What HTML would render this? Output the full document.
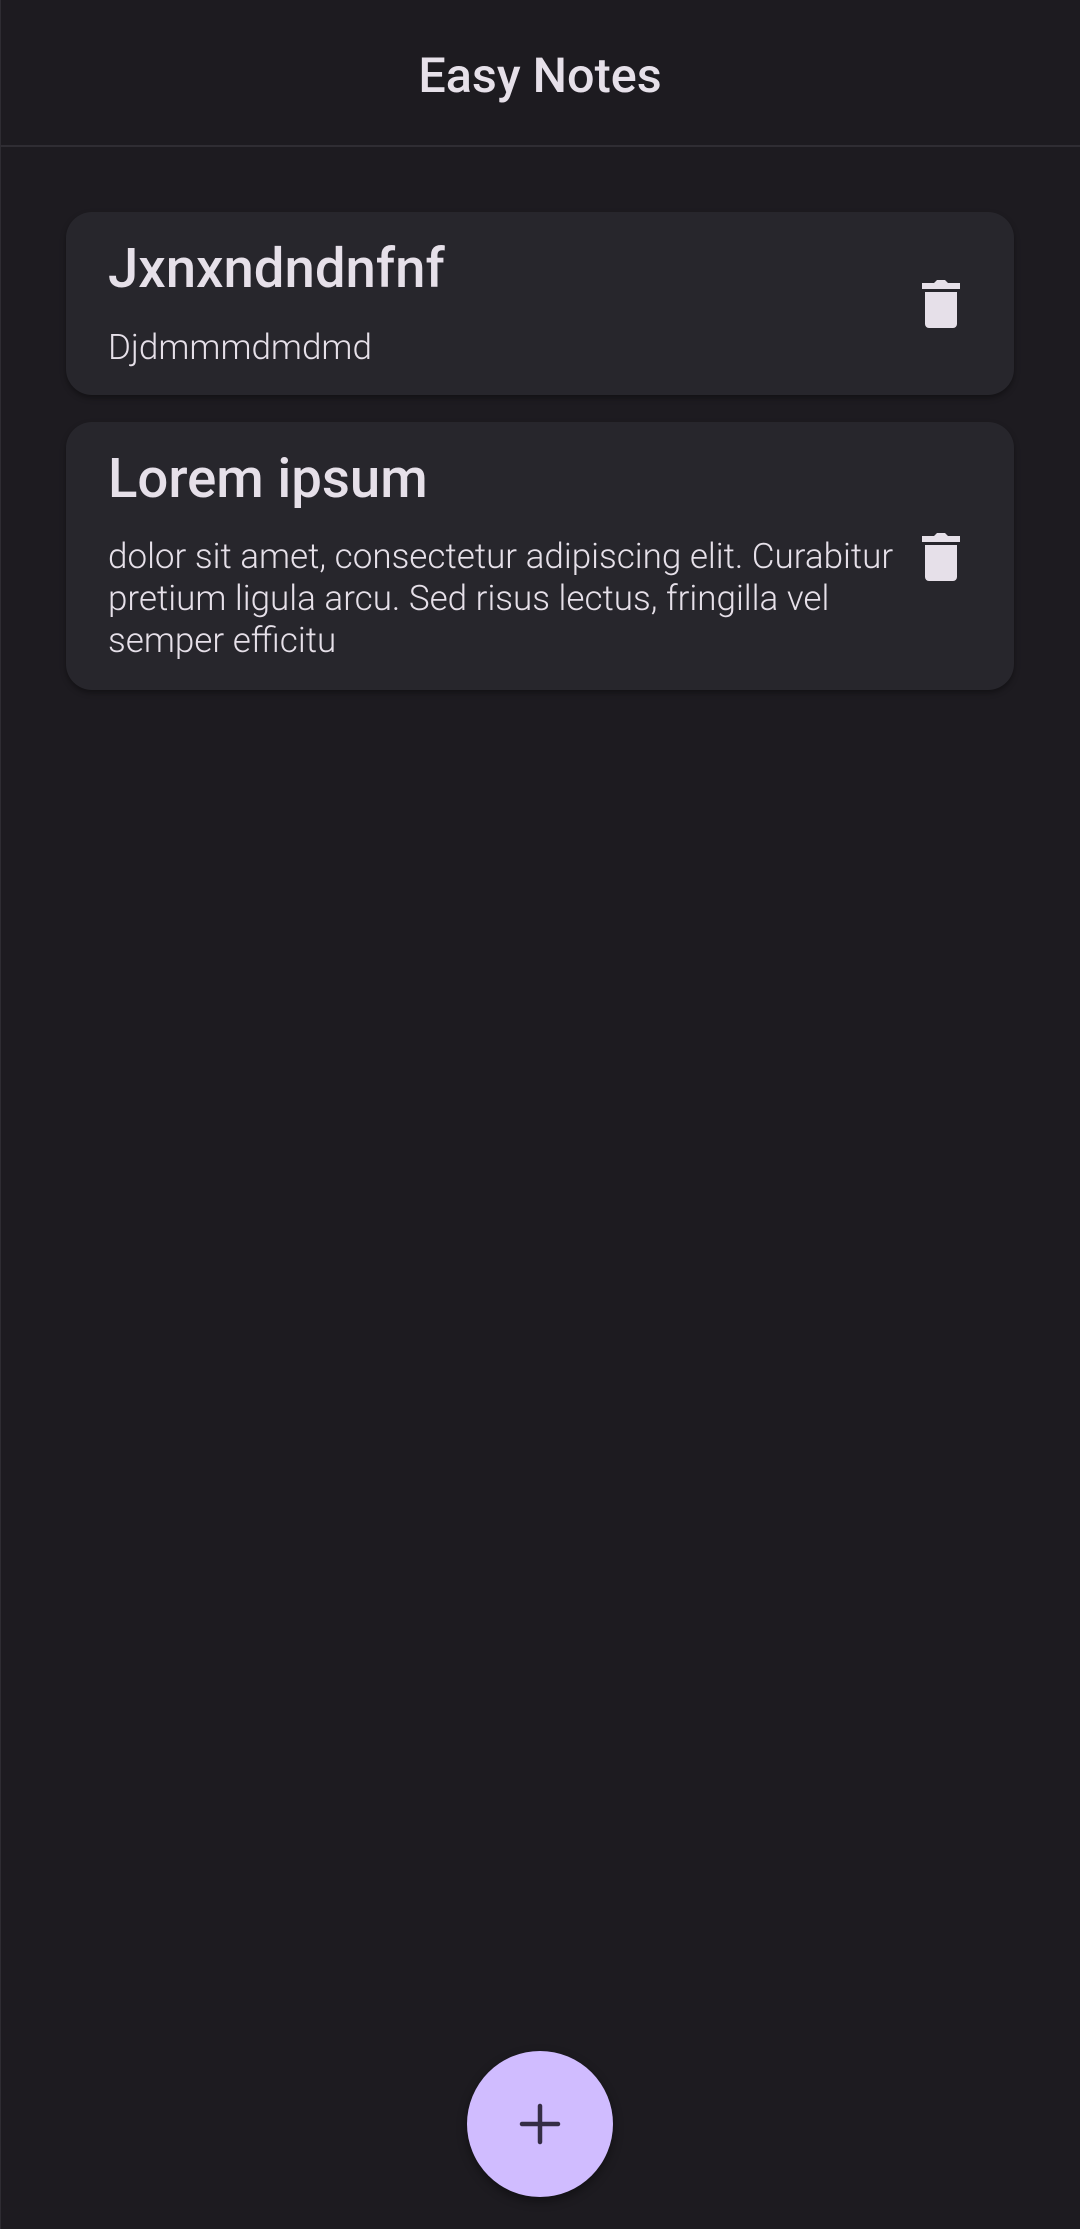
<!DOCTYPE html>
<html><head><meta charset="utf-8"><style>
*{margin:0;padding:0;box-sizing:border-box}
body{width:1080px;height:2229px;background:#1d1b20;position:relative;overflow:hidden;font-family:"Roboto","Liberation Sans",sans-serif;color:#e6e0e9}
.a{position:absolute;white-space:nowrap}
.hdr{left:0;right:0;top:52px;text-align:center;font-size:48.5px;line-height:48px;font-weight:500}
.div{left:0;right:0;top:145px;height:2px;background:#2f2d33}
.card{position:absolute;left:66px;width:948px;background:#27262c;border-radius:26px;box-shadow:0 3px 6px rgba(0,0,0,.35)}
.t{left:108px;font-size:54.5px;line-height:52px;font-weight:500}
.b{left:108px;font-size:35px;line-height:42px;font-weight:300}
.tr{position:absolute;left:922px;width:38px}
.fab{position:absolute;left:467px;top:2051px;width:146px;height:146px;border-radius:50%;background:#d0bcff;box-shadow:0 4px 10px rgba(0,0,0,.4)}
.edge{position:absolute;left:0;top:0;width:1px;height:2229px;background:#2e2c32}
</style></head><body>
<div class="edge"></div>
<div class="a hdr">Easy Notes</div>
<div class="a div"></div>
<div class="card" style="top:212px;height:183px"></div>
<div class="card" style="top:422px;height:268px"></div>
<div class="a t" style="top:243px">Jxnxndndnfnf</div>
<div class="a b" style="top:327px">Djdmmmdmdmd</div>
<div class="a t" style="top:453px">Lorem ipsum</div>
<div class="a b" style="top:536px">dolor sit amet, consectetur adipiscing elit. Curabitur<br>pretium ligula arcu. Sed risus lectus, fringilla vel<br>semper efficitu</div>
<svg class="tr" style="top:280px" width="38" height="48" viewBox="0 0 38 48"><path d="M0 3h12l3-3h8l3 3h12v6H0z M3 12h32v32a4 4 0 0 1-4 4H7a4 4 0 0 1-4-4z" fill="#e6e0e9"/></svg>
<svg class="tr" style="top:533px" width="38" height="48" viewBox="0 0 38 48"><path d="M0 3h12l3-3h8l3 3h12v6H0z M3 12h32v32a4 4 0 0 1-4 4H7a4 4 0 0 1-4-4z" fill="#e6e0e9"/></svg>
<div class="fab"><svg width="146" height="146" viewBox="0 0 146 146"><path d="M73 55v36M55 73h36" stroke="#352d45" stroke-width="4.5" stroke-linecap="round"/></svg></div>
</body></html>
